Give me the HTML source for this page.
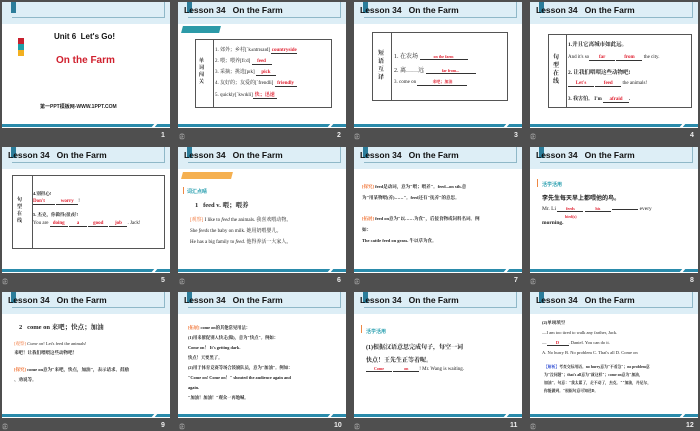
<!DOCTYPE html>
<html><head><meta charset="utf-8"><style>
*{margin:0;padding:0;box-sizing:border-box}
body{width:700px;height:431px;background:#4f4f4f;position:relative;overflow:hidden;font-family:"Liberation Sans","Noto Sans CJK SC",sans-serif}
.s{position:absolute;width:168px;height:126px;background:#fff;overflow:hidden}
.hd{position:absolute;left:0;top:0;width:168px;height:22px;background:#ddeef6}
.br{position:absolute;left:10px;top:0;width:153px;height:16px;border-right:1px solid #8fb8c8;border-bottom:1px solid #8fb8c8}
.sq{position:absolute;left:9px;top:0;width:5px;height:11px;background:#2c7d9a}
.tt{position:absolute;left:6px;top:3px;font-size:8.5px;font-weight:bold;color:#111;white-space:nowrap}
.bb{position:absolute;left:0;top:122px;width:168px;height:3px;background:#2a8bab}
.bb:after{content:"";position:absolute;right:14px;top:0;width:3px;height:3px;background:#fff;transform:skewX(-40deg)}
.n{position:absolute;color:#eee;font-size:7px;font-weight:bold}
.ic{position:absolute;color:#ccc;font-size:6px}
.a{position:absolute;white-space:nowrap;font-family:"Liberation Serif","Noto Serif CJK SC",serif;font-size:5px;color:#222}
.r{color:#e02030;font-weight:bold}
.u{display:inline-block;border-bottom:0.7px solid #333;text-align:center}
.box{position:absolute;border:1px solid #555}
.dv{position:absolute;top:0;bottom:0;border-left:1px solid #555}
.badge{position:absolute;left:4px;top:24px;width:38px;height:7px;background:#2c9aa8;transform:skewX(-15deg)}
.badgeo{position:absolute;left:4px;top:24px;width:38px;height:7px;background:#f5b050;transform:skewX(-15deg)}
.hl{position:absolute;font-size:5px;color:#2ca0b0;font-weight:bold}
.b{font-weight:bold}
.o{color:#f07030}
</style></head><body>

<!-- slide 1 -->
<div class="s" style="left:2px;top:2px">
<div class="hd"></div><div class="br"></div><div class="sq"></div><div class="bb"></div>
<div style="position:absolute;left:52px;top:30px;font-size:8px;font-weight:bold;color:#111">Unit 6&nbsp; Let's Go!</div>
<div style="position:absolute;left:16px;top:36px;width:6px;height:6px;background:#c8202e"></div>
<div style="position:absolute;left:16px;top:42px;width:6px;height:6px;background:#1fa0a8"></div>
<div style="position:absolute;left:16px;top:48px;width:6px;height:6px;background:#f2b020"></div>
<div style="position:absolute;left:54px;top:53px;font-size:10px;font-weight:bold;color:#d0202e">On the Farm</div>
<div style="position:absolute;left:38px;top:101px;font-size:5px;font-weight:bold;color:#222">第一PPT模板网-WWW.1PPT.COM</div>
</div>
<div class="n" style="left:161px;top:132px">1</div>

<!-- slide 2 -->
<div class="s" style="left:178px;top:2px">
<div class="hd"></div><div class="br"></div><div class="sq"></div><div class="tt">Lesson 34&nbsp;&nbsp; On the Farm</div><div class="bb"></div>
<div class="badge"></div>
<div class="box" style="left:17px;top:37px;width:137px;height:69px"><div class="dv" style="left:17px"></div></div>
<div class="a b" style="left:21px;top:56px;font-size:5px;line-height:7px;white-space:normal;width:8px">单词闯关</div>
<div class="a" style="left:37px;top:44px">1. 郊外；乡村[ˈkʌntrɪsaɪd] <span class="u" style="width:26px"><span class="r">countryside</span></span></div>
<div class="a" style="left:37px;top:55px">2. 喂；喂养[fiːd] <span class="u" style="width:20px"><span class="r">feed</span></span></div>
<div class="a" style="left:37px;top:66px">3. 采摘；挑选[pɪk] <span class="u" style="width:20px"><span class="r">pick</span></span></div>
<div class="a" style="left:37px;top:77px">4. 友好的；友爱的[ˈfrendli] <span class="u" style="width:22px"><span class="r">friendly</span></span></div>
<div class="a" style="left:37px;top:89px">5. quickly[ˈkwɪkli]<span class="u" style="width:24px"><span class="r">快；迅速</span></span></div>
</div>
<div class="ic" style="left:179px;top:132px">㊣</div><div class="n" style="left:337px;top:132px">2</div>

<!-- slide 3 -->
<div class="s" style="left:354px;top:2px">
<div class="hd"></div><div class="br"></div><div class="sq"></div><div class="tt">Lesson 34&nbsp;&nbsp; On the Farm</div><div class="bb"></div>
<div class="box" style="left:18px;top:30px;width:136px;height:69px"><div class="dv" style="left:18px"></div></div>
<div class="a b" style="left:24px;top:48px;font-size:6px;line-height:8px;white-space:normal;width:8px">短语互译</div>
<div class="a" style="left:40px;top:49px;font-size:6px">1. 在农场 <span class="u" style="width:48px;font-size:4px"><span class="r">on the farm</span></span></div>
<div class="a" style="left:40px;top:63px;font-size:6px">2. 离……远 <span class="u" style="width:50px;font-size:4px"><span class="r">far from...</span></span></div>
<div class="a" style="left:40px;top:77px;font-size:5px">3. come on <span class="u" style="width:50px;font-size:4px"><span class="r">来吧；加油</span></span></div>
</div>
<div class="ic" style="left:354px;top:132px">㊣</div><div class="n" style="left:514px;top:132px">3</div>

<!-- slide 4 -->
<div class="s" style="left:530px;top:2px">
<div class="hd"></div><div class="br"></div><div class="sq"></div><div class="tt">Lesson 34&nbsp;&nbsp; On the Farm</div><div class="bb"></div>
<div class="box" style="left:18px;top:32px;width:144px;height:74px"><div class="dv" style="left:17px"></div></div>
<div class="a b" style="left:23px;top:52px;font-size:6px;line-height:8px;white-space:normal;width:8px">句型在线</div>
<div class="a b" style="left:38px;top:38px;font-size:5.5px">1.并且它离城市如此远。</div>
<div class="a" style="left:38px;top:53px">And it's so<span class="u" style="width:26px"><span class="r">far</span></span> <span class="u" style="width:26px"><span class="r">from</span></span> the city.</div>
<div class="a b" style="left:38px;top:66px;font-size:5.5px">2. 让我们喂喂这些动物吧!</div>
<div class="a" style="left:38px;top:79px"><span class="u" style="width:26px"><span class="r">Let's</span></span> <span class="u" style="width:26px"><span class="r">feed</span></span> the animals!</div>
<div class="a b" style="left:38px;top:93px">3. 我害怕。 I'm <span class="u" style="width:26px"><span class="r">afraid</span></span>.</div>
</div>
<div class="ic" style="left:530px;top:132px">㊣</div><div class="n" style="left:690px;top:132px">4</div>

<!-- slide 5 -->
<div class="s" style="left:2px;top:147px">
<div class="hd"></div><div class="br"></div><div class="sq"></div><div class="tt">Lesson 34&nbsp;&nbsp; On the Farm</div><div class="bb"></div>
<div class="box" style="left:10px;top:28px;width:153px;height:74px"><div class="dv" style="left:19px"></div></div>
<div class="a b" style="left:15px;top:50px;line-height:7px;white-space:normal;width:7px">句型在线</div>
<div class="a b" style="left:31px;top:44px;font-size:4.5px">4.别担心!</div>
<div class="a" style="left:31px;top:52px"><span class="u" style="width:22px;text-align:left"><span class="r">Don't</span></span> <span class="u" style="width:22px"><span class="r">worry</span></span>!</div>
<div class="a b" style="left:31px;top:65px;font-size:4.5px">5. 杰克，你做得(很)好!</div>
<div class="a" style="left:31px;top:74px">You are <span class="u" style="width:18px"><span class="r">doing</span></span> <span class="u" style="width:18px"><span class="r">a</span></span> <span class="u" style="width:20px"><span class="r">good</span></span> <span class="u" style="width:18px"><span class="r">job</span></span>. Jack!</div>
</div>
<div class="ic" style="left:2px;top:277px">㊣</div><div class="n" style="left:161px;top:277px">5</div>

<!-- slide 6 -->
<div class="s" style="left:178px;top:147px">
<div class="hd"></div><div class="br"></div><div class="sq"></div><div class="tt">Lesson 34&nbsp;&nbsp; On the Farm</div><div class="bb"></div>
<div class="badgeo" style="top:25px;width:50px"></div>
<div style="position:absolute;left:5px;top:40px;width:1px;height:7px;background:#e84"></div>
<div class="hl" style="left:9px;top:41px">词汇点睛</div>
<div class="a b" style="left:17px;top:53px;font-size:6.5px">1&nbsp;&nbsp; feed v. 喂；喂养</div>
<div class="a" style="left:12px;top:69px"><span class="o">[观察]</span> I like to <i>feed</i> the animals. 我喜欢喂动物。</div>
<div class="a" style="left:12px;top:80px">She <i>feeds</i> the baby on milk. 她用奶喂婴儿。</div>
<div class="a" style="left:12px;top:91px">He has a big family to <i>feed</i>. 他得养活一大家人。</div>
</div>
<div class="ic" style="left:179px;top:277px">㊣</div><div class="n" style="left:337px;top:277px">6</div>

<!-- slide 7 -->
<div class="s" style="left:354px;top:147px">
<div class="hd"></div><div class="br"></div><div class="sq"></div><div class="tt">Lesson 34&nbsp;&nbsp; On the Farm</div><div class="bb"></div>
<div class="a b" style="left:8px;top:37px;font-size:4.5px"><span class="o">[探究]</span> feed是动词，意为"喂；喂养"。feed...on sth.意</div>
<div class="a b" style="left:8px;top:48px;font-size:4.5px">为"用某物喂(养)……"。feed还有"抚养"的意思。</div>
<div class="a b" style="left:8px;top:69px;font-size:4.5px"><span class="o">[拓展]</span> feed on意为"以……为食"，后接食物或饲料名词。例</div>
<div class="a b" style="left:8px;top:80px;font-size:4.5px">如：</div>
<div class="a b" style="left:8px;top:91px;font-size:4.5px">The cattle feed on grass. 牛以草为食。</div>
</div>
<div class="ic" style="left:354px;top:277px">㊣</div><div class="n" style="left:514px;top:277px">7</div>

<!-- slide 8 -->
<div class="s" style="left:530px;top:147px">
<div class="hd"></div><div class="br"></div><div class="sq"></div><div class="tt">Lesson 34&nbsp;&nbsp; On the Farm</div><div class="bb"></div>
<div style="position:absolute;left:7px;top:32px;width:1px;height:8px;background:#e84"></div>
<div class="hl" style="left:12px;top:34px">活学活用</div>
<div class="a b" style="left:12px;top:46px;font-size:6px;font-family:'Liberation Sans','Noto Sans CJK SC',sans-serif">李先生每天早上都喂他的鸟。</div>
<div class="a" style="left:12px;top:59px;font-size:5.5px">Mr. Li <span class="u" style="width:26px;font-size:4px"><span class="r">feeds</span></span> <span class="u" style="width:26px;font-size:4px"><span class="r">his</span></span> <span class="u" style="width:26px"></span> every</div>
<div class="a r" style="left:35px;top:67px;font-size:4px">bird(s)</div>
<div class="a b" style="left:12px;top:73px;font-size:5.5px">morning.</div>
</div>
<div class="ic" style="left:530px;top:277px">㊣</div><div class="n" style="left:690px;top:277px">8</div>

<!-- slide 9 -->
<div class="s" style="left:2px;top:292px">
<div class="hd"></div><div class="br"></div><div class="sq"></div><div class="tt">Lesson 34&nbsp;&nbsp; On the Farm</div><div class="bb"></div>
<div class="a b" style="left:17px;top:30px;font-size:6.5px">2&nbsp;&nbsp; come on 来吧；快点；加油</div>
<div class="a" style="left:12px;top:49px;font-size:4.5px"><span class="o">[观察]</span> <i>Come on</i>! Let's feed the animals!</div>
<div class="a b" style="left:12px;top:58px;font-size:4.5px">来吧！让我们喂喂这些动物吧！</div>
<div class="a b" style="left:12px;top:75px;font-size:4.5px"><span class="o">[探究]</span> come on意为"来吧，快点，加油"，表示请求、鼓励</div>
<div class="a b" style="left:12px;top:85px;font-size:4.5px">、劝说等。</div>
</div>
<div class="ic" style="left:2px;top:422px">㊣</div><div class="n" style="left:161px;top:422px">9</div>

<!-- slide 10 -->
<div class="s" style="left:178px;top:292px">
<div class="hd"></div><div class="br"></div><div class="sq"></div><div class="tt">Lesson 34&nbsp;&nbsp; On the Farm</div><div class="bb"></div>
<div class="a b" style="left:10px;top:33px;font-size:4.3px"><span class="o">[拓展]</span> come on的其他常见用法：</div>
<div class="a b" style="left:10px;top:43px;font-size:4.3px">(1)用来催促别人快走(做)，意为"快点"。例如：</div>
<div class="a b" style="left:10px;top:53px;font-size:4.3px">Come on！ It's getting dark.</div>
<div class="a b" style="left:10px;top:63px;font-size:4.3px">快点！天要黑了。</div>
<div class="a b" style="left:10px;top:73px;font-size:4.3px">(2)用于体育竞赛等场合鼓励队员，意为"加油"。例如：</div>
<div class="a b" style="left:10px;top:83px;font-size:4.3px">"Come on! Come on！" shouted the audience again and</div>
<div class="a b" style="left:10px;top:93px;font-size:4.3px">again.</div>
<div class="a b" style="left:10px;top:103px;font-size:4.3px">"加油！加油！"观众一再地喊。</div>
</div>
<div class="ic" style="left:179px;top:422px">㊣</div><div class="n" style="left:334px;top:422px">10</div>

<!-- slide 11 -->
<div class="s" style="left:354px;top:292px">
<div class="hd"></div><div class="br"></div><div class="sq"></div><div class="tt">Lesson 34&nbsp;&nbsp; On the Farm</div><div class="bb"></div>
<div style="position:absolute;left:7px;top:33px;width:1px;height:8px;background:#e84"></div>
<div class="hl" style="left:12px;top:36px">活学活用</div>
<div class="a b" style="left:12px;top:50px;font-size:6px">(1)根据汉语意思完成句子，每空一词</div>
<div class="a b" style="left:12px;top:63px;font-size:6px">快点！王先生正等着呢。</div>
<div class="a" style="left:12px;top:74px;font-size:5px"><span class="u" style="width:26px;font-size:4px"><span class="r">Come</span></span> <span class="u" style="width:26px;font-size:4px"><span class="r">on</span></span>! Mr. Wang is waiting.</div>
</div>
<div class="ic" style="left:354px;top:422px">㊣</div><div class="n" style="left:510px;top:422px">11</div>

<!-- slide 12 -->
<div class="s" style="left:530px;top:292px">
<div class="hd"></div><div class="br"></div><div class="sq"></div><div class="tt">Lesson 34&nbsp;&nbsp; On the Farm</div><div class="bb"></div>
<div class="a b" style="left:12px;top:28px;font-size:4.5px">(2)单项填空</div>
<div class="a" style="left:12px;top:38px;font-size:4.5px">—I am too tired to walk any farther, Jack.</div>
<div class="a" style="left:12px;top:48px;font-size:4.5px">—<span class="u" style="width:22px"><span class="r">D</span></span>. Daniel. You can do it.</div>
<div class="a" style="left:12px;top:58px;font-size:4.5px">A. No hurry B. No problem C. That's all D. Come on</div>
<div class="a b" style="left:14px;top:73px;font-size:3.8px"><span style="color:#2040d0">【解析】</span>考查交际用语。no hurry意为"不着急"；no problem意</div>
<div class="a b" style="left:14px;top:81px;font-size:3.8px">为"没问题"；that's all意为"就这样"；come on意为"加油，</div>
<div class="a b" style="left:14px;top:89px;font-size:3.8px">加油"。句意："我太累了，走不动了，杰克。""加油，丹尼尔，</div>
<div class="a b" style="left:14px;top:97px;font-size:3.8px">你能做到。"根据句意可知选D。</div>
</div>
<div class="ic" style="left:530px;top:422px">㊣</div><div class="n" style="left:686px;top:422px">12</div>

</body></html>
